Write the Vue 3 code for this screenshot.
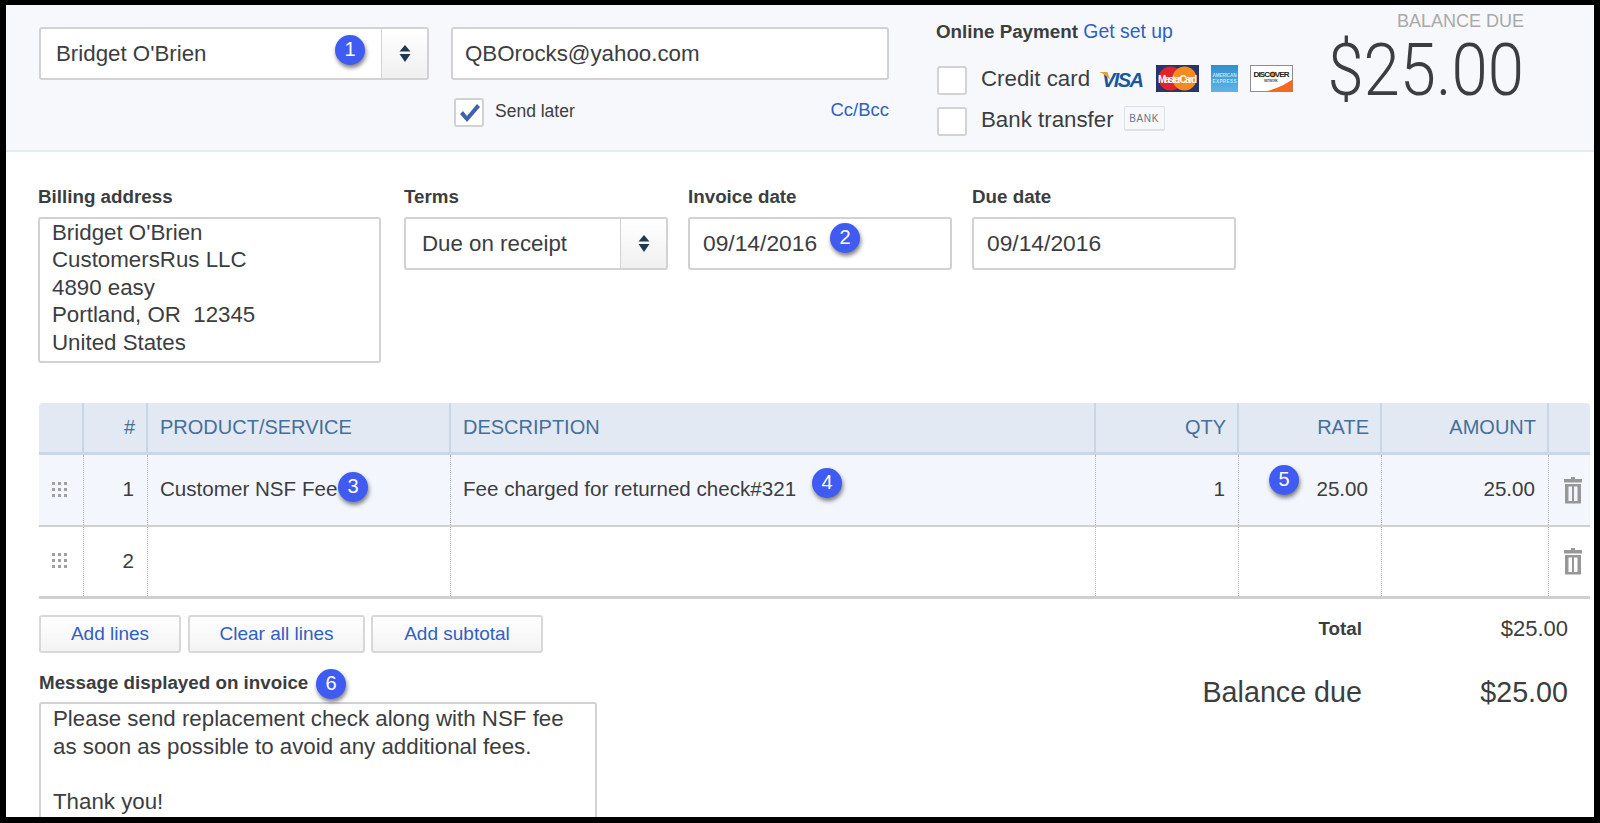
<script setup>
const rows = [
  { n: 1, product: 'Customer NSF Fee', description: 'Fee charged for returned check#321', qty: '1', rate: '25.00', amount: '25.00', active: true },
  { n: 2, product: '', description: '', qty: '', rate: '', amount: '', active: false },
]
const addressLines = ["Bridget O'Brien", 'CustomersRus LLC', '4890 easy', 'Portland, OR  12345', 'United States']
const messageLines = ['Please send replacement check along with NSF fee', 'as soon as possible to avoid any additional fees.', '\u00a0', 'Thank you!']
</script>

<template>
  <div class="page">
    <header class="top">
      <div class="select customer">
        <span class="select-value">Bridget O'Brien</span>
        <span class="badge badge-1">1</span>
        <span class="select-btn">
          <svg width="12" height="17" viewBox="0 0 12 17"><path d="M6 0l5.500 6.500H.5zM6 17L.5 9h11z" fill="#1d3a55" /></svg>
        </span>
      </div>

      <div class="email-col">
        <div class="input email">QBOrocks@yahoo.com</div>
        <div class="send-row">
          <span class="check">
            <svg width="24" height="22" viewBox="0 0 24 22"><path d="M3 12l3-3 4 5L20 2l3 3-13 15z" fill="#3f62ad" /></svg>
          </span>
          <span class="send-label">Send later</span>
          <a class="link cc">Cc/Bcc</a>
        </div>
      </div>

      <div class="payment">
        <div class="pay-title"><b>Online Payment</b> <a class="link">Get set up</a></div>
        <div class="pay-row">
          <span class="check"></span>
          <span class="pay-label">Credit card</span>
          <svg class="visa" width="46" height="16" viewBox="0 0 46 16">
            <text x="3" y="15.500" font-family="Liberation Sans" font-size="20" font-weight="700" font-style="italic" fill="#15589b" textLength="42">VISA</text>
            <path d="M0 1h8.500l2.500 8C8 5 4 2.500 0 1z" fill="#f0a030" />
          </svg>
          <svg class="card mc" width="43" height="27" viewBox="0 0 43 27">
            <rect width="43" height="27" fill="#27346e" />
            <circle cx="14.500" cy="13.500" r="12" fill="#e2232b" />
            <circle cx="28.500" cy="13.500" r="12" fill="#f58a1f" />
            <text x="21.500" y="17.500" text-anchor="middle" font-family="Liberation Sans" font-size="10" font-weight="700" fill="#fff" textLength="39">MasterCard</text>
          </svg>
          <svg class="card amex" width="27" height="27" viewBox="0 0 27 27">
            <defs>
              <linearGradient id="amexFill" x1="0" y1="0" x2="0" y2="1">
                <stop offset="0" stop-color="#2f8fd0" />
                <stop offset="1" stop-color="#5fb4e6" />
              </linearGradient>
            </defs>
            <rect width="27" height="27" fill="url(#amexFill)" />
            <text x="13.500" y="12" text-anchor="middle" font-family="Liberation Sans" font-size="4.600" font-weight="700" fill="#bfe3f6" textLength="24">AMERICAN</text>
            <text x="13.500" y="18" text-anchor="middle" font-family="Liberation Sans" font-size="4.600" font-weight="700" fill="#bfe3f6" textLength="24">EXPRESS</text>
          </svg>
          <svg class="card discover" width="43" height="27" viewBox="0 0 43 27">
            <rect x=".5" y=".5" width="42" height="26" fill="#fff" stroke="#8d8d8d" />
            <path d="M14 26.500c12-2 21-7 28.500-12v12z" fill="#f26a21" />
            <circle cx="23" cy="9.500" r="3" fill="#f28a21" />
            <text x="21.500" y="12" text-anchor="middle" font-family="Liberation Sans" font-size="8" font-weight="700" fill="#222" textLength="36">DISCOVER</text>
            <text x="21" y="17" text-anchor="middle" font-family="Liberation Sans" font-size="3" font-weight="700" fill="#555" textLength="14">NETWORK</text>
          </svg>
        </div>
        <div class="pay-row">
          <span class="check"></span>
          <span class="pay-label">Bank transfer</span>
          <span class="bank">BANK</span>
        </div>
      </div>

      <div class="balance">
        <div class="balance-label">BALANCE DUE</div>
        <div class="balance-amount">$25.00</div>
      </div>
    </header>

    <main class="body">
      <section class="fields">
        <div class="field address-field">
          <label>Billing address</label>
          <div class="input address">
            <div v-for="line in addressLines" :key="line">{{ line }}</div>
          </div>
        </div>
        <div class="field terms-field">
          <label>Terms</label>
          <div class="select terms">
            <span class="select-value">Due on receipt</span>
            <span class="select-btn">
              <svg width="12" height="17" viewBox="0 0 12 17"><path d="M6 0l5.500 6.500H.5zM6 17L.5 9h11z" fill="#1d3a55" /></svg>
            </span>
          </div>
        </div>
        <div class="field date-field">
          <label>Invoice date</label>
          <div class="input date">09/14/2016<span class="badge badge-2">2</span></div>
        </div>
        <div class="field date-field">
          <label>Due date</label>
          <div class="input date">09/14/2016</div>
        </div>
      </section>

      <section class="table">
        <div class="tr head">
          <div class="cell"></div>
          <div class="cell num">#</div>
          <div class="cell">PRODUCT/SERVICE</div>
          <div class="cell">DESCRIPTION</div>
          <div class="cell num">QTY</div>
          <div class="cell num">RATE</div>
          <div class="cell num">AMOUNT</div>
          <div class="cell last"></div>
        </div>
        <div v-for="row in rows" :key="row.n" class="tr line" :class="{ active: row.active }">
          <div class="cell drag">
            <span class="dots"><i v-for="d in 9" :key="d"></i></span>
          </div>
          <div class="cell num">{{ row.n }}</div>
          <div class="cell">
            {{ row.product }}
            <span v-if="row.active" class="badge badge-3">3</span>
          </div>
          <div class="cell">
            {{ row.description }}
            <span v-if="row.active" class="badge badge-4">4</span>
          </div>
          <div class="cell num">{{ row.qty }}</div>
          <div class="cell num">
            <span v-if="row.active" class="badge badge-5">5</span>
            {{ row.rate }}
          </div>
          <div class="cell num">{{ row.amount }}</div>
          <div class="cell last trash">
            <svg width="18" height="27" viewBox="0 0 18 27">
              <path d="M7 0h4v2h7v3.500H0V2h7zM1 7h16v19.500H1zM4.500 9.500v14.500H8V9.500zM10 9.500v14.500h3.500V9.500z" fill="#979797" fill-rule="evenodd" />
            </svg>
          </div>
        </div>
      </section>

      <section class="bottom">
        <div class="bottom-left">
          <div class="buttons">
            <button class="btn btn-add">Add lines</button>
            <button class="btn btn-clear">Clear all lines</button>
            <button class="btn btn-sub">Add subtotal</button>
          </div>
          <label class="message-label">Message displayed on invoice<span class="badge badge-6">6</span></label>
          <div class="input message">
            <div v-for="(line, i) in messageLines" :key="i">{{ line }}</div>
          </div>
        </div>
        <div class="totals">
          <div class="total-row">
            <span class="total-label">Total</span>
            <span class="total-value">$25.00</span>
          </div>
          <div class="total-row big">
            <span class="total-label">Balance due</span>
            <span class="total-value">$25.00</span>
          </div>
        </div>
      </section>
    </main>
  </div>
</template>

<style scoped>
.page {
  box-sizing: border-box;
  width: 1600px;
  height: 823px;
  overflow: hidden;
  background: #fff;
  border: solid #000;
  border-width: 5px 6px 6px 6px;
  font-family: "Liberation Sans", Arial, sans-serif;
  color: #3c3d40;
  font-size: 22.300px;
}

.link {
  color: #2f5fc4;
}

.top {
  box-sizing: border-box;
  display: flex;
  height: 147px;
  padding: 22px 0 0 33px;
  background: #f6f8fb;
  border-bottom: 2px solid #e3ebf2;
}

.input,
.select {
  box-sizing: border-box;
  background: #fff;
  border: 2px solid #d2d2d2;
  border-radius: 3px;
}

.select {
  position: relative;
  display: flex;
  align-items: center;
}

.select-value {
  flex: 1;
}

.select-btn {
  display: flex;
  align-items: center;
  justify-content: center;
  align-self: stretch;
  border-left: 1px solid #d2d2d2;
  background: linear-gradient(#fff, #f0f0f0);
}

.customer {
  width: 390px;
  height: 53px;
  margin-right: 22px;
  padding-left: 15px;
}

.customer .select-btn {
  width: 45px;
}

.email-col {
  width: 438px;
  margin-right: 47px;
}

.email {
  height: 53px;
  line-height: 49px;
  padding-left: 12px;
}

.send-row {
  display: flex;
  align-items: center;
  margin-top: 18px;
  padding-left: 3px;
}

.check {
  box-sizing: border-box;
  display: flex;
  align-items: center;
  justify-content: center;
  flex: none;
  width: 30px;
  height: 29px;
  background: #fff;
  border: 2px solid #d2d2d2;
  border-radius: 3px;
}

.send-label {
  margin: 0 0 3px 11px;
  font-size: 17.500px;
}

.cc {
  margin: 0 0 6px auto;
  font-size: 18.500px;
}

.payment {
  width: 394px;
  margin-top: -6px;
}

.pay-title {
  font-size: 19.400px;
  line-height: 20px;
  margin-bottom: 24px;
}

.pay-title b {
  font-size: 18.800px;
}

.pay-row {
  display: flex;
  align-items: center;
  height: 29px;
  margin-bottom: 12px;
  padding-left: 1px;
}

.pay-label {
  margin: 0 0 4px 14px;
  font-size: 22.300px;
}

.visa {
  overflow: visible;
  margin: 0 0 4px 9px;
}

.card {
  margin-bottom: 4px;
}

.card.mc {
  margin-left: 11px;
}

.card.amex {
  margin-left: 12px;
}

.card.discover {
  margin-left: 12px;
}

.bank {
  box-sizing: border-box;
  width: 41px;
  height: 25px;
  margin: 0 0 7px 10px;
  border: 1px solid #dde1e8;
  border-bottom-width: 2px;
  border-radius: 2px;
  text-align: center;
  line-height: 23px;
  font-size: 10px;
  letter-spacing: .6px;
  color: #6c7585;
}

.balance {
  display: flex;
  flex-direction: column;
  align-items: flex-end;
  width: 194px;
  margin-top: -18px;
}

.balance-label {
  font-size: 18px;
  line-height: 24px;
  color: #a9a9a9;
}

.balance-amount {
  margin-top: 2px;
  font-family: Roboto, "Liberation Sans", sans-serif;
  font-weight: 300;
  font-size: 72px;
  line-height: 72px;
  color: #3c3d40;
  transform: scaleX(.906);
  transform-origin: right center;
}

.body {
  padding: 35px 0 0 33px;
}

.fields {
  display: flex;
  height: 216px;
  margin-left: -1px;
}

.field label,
.message-label {
  display: block;
  height: 20px;
  line-height: 20px;
  margin-bottom: 10px;
  font-size: 18.800px;
  font-weight: 700;
}

.address-field {
  width: 343px;
  margin-right: 23px;
}

.address {
  height: 146px;
  padding: 0 12px;
  line-height: 27.400px;
  white-space: pre;
}

.terms-field {
  width: 264px;
  margin-right: 20px;
}

.terms {
  height: 53px;
  padding-left: 16px;
}

.terms .select-btn {
  width: 45px;
}

.date-field {
  width: 264px;
  margin-right: 20px;
}

.date {
  position: relative;
  height: 53px;
  line-height: 49px;
  padding-left: 13px;
  font-size: 22.800px;
}

.table {
  width: 1551px;
}

.tr {
  box-sizing: border-box;
  display: grid;
  grid-template-columns: 45px 64px 303px 645px 143px 143px 167px 41px;
}

.cell {
  position: relative;
  box-sizing: border-box;
  display: flex;
  align-items: center;
  padding: 0 12px;
  border-right: 1px dotted #b4b4b4;
}

.cell.num {
  justify-content: flex-end;
}

.cell.last {
  border-right: none;
}

.head {
  height: 52px;
  background: #e3e9f2;
  border-bottom: 3px solid #c7d7e8;
  border-radius: 4px 4px 0 0;
  color: #46709a;
  font-size: 20px;
}

.head .cell {
  padding: 0 11px 0 12px;
  border-right: 2px solid #c7d7e8;
}

.head .cell.last {
  border-right: none;
}

.line {
  height: 72px;
  border-bottom: 2px solid #cfcfcf;
  font-size: 20.600px;
}

.line .cell {
  padding-bottom: 2px;
}

.line .cell.num {
  padding-right: 13px;
}

.line.active {
  background: #f3f7fd;
}

.line:last-child {
  border-bottom-width: 3px;
}

.line .drag {
  padding-left: 13px;
}

.dots {
  display: grid;
  grid-template-columns: repeat(3, 3px);
  gap: 3px;
}

.dots i {
  width: 3px;
  height: 3px;
  background: #a0a0a0;
}

.line .trash {
  padding: 0 0 0 15px;
}

.badge {
  position: absolute;
  box-sizing: border-box;
  width: 30px;
  height: 30px;
  border-radius: 50%;
  background: #3f5bf2;
  box-shadow: 1px 3px 4px rgba(0, 0, 0, .5);
  color: #fff;
  font-size: 20px;
  font-weight: 400;
  line-height: 28px;
  text-align: center;
}

.badge-1 {
  left: 294px;
  top: 6px;
}

.badge-2 {
  left: 140px;
  top: 4px;
}

.badge-3 {
  left: 190px;
  top: 17px;
}

.badge-4 {
  left: 361px;
  top: 13px;
}

.badge-5 {
  left: 30px;
  top: 10px;
}

.badge-6 {
  left: 277px;
  top: -4px;
}

.bottom {
  display: flex;
  justify-content: space-between;
  width: 1529px;
}

.buttons {
  display: flex;
  margin-top: 16px;
}

.btn {
  box-sizing: border-box;
  height: 38px;
  margin-right: 7px;
  padding: 0;
  border: 2px solid #d8d8d8;
  border-radius: 3px;
  background: linear-gradient(#fff, #f3f3f3);
  color: #2f5fc4;
  font-family: inherit;
  font-size: 19px;
}

.btn-add {
  width: 142px;
}

.btn-clear {
  width: 177px;
  margin-right: 6px;
}

.btn-sub {
  width: 172px;
}

.message-label {
  position: relative;
  margin: 20px 0 9px;
}

.message {
  width: 558px;
  height: 140px;
  padding: 1px 12px;
  line-height: 27.700px;
}

.totals {
  width: 370px;
  padding-top: 20px;
}

.total-row {
  display: flex;
  align-items: center;
  justify-content: flex-end;
  height: 20px;
  font-size: 22px;
}

.total-label {
  margin-left: auto;
  width: 164px;
  text-align: right;
  font-size: 18.800px;
  font-weight: 700;
}

.total-value {
  width: 206px;
  text-align: right;
}

.big {
  margin-top: 43px;
  font-size: 28.700px;
}

.big .total-label {
  font-size: 28.700px;
  font-weight: 400;
}
</style>
